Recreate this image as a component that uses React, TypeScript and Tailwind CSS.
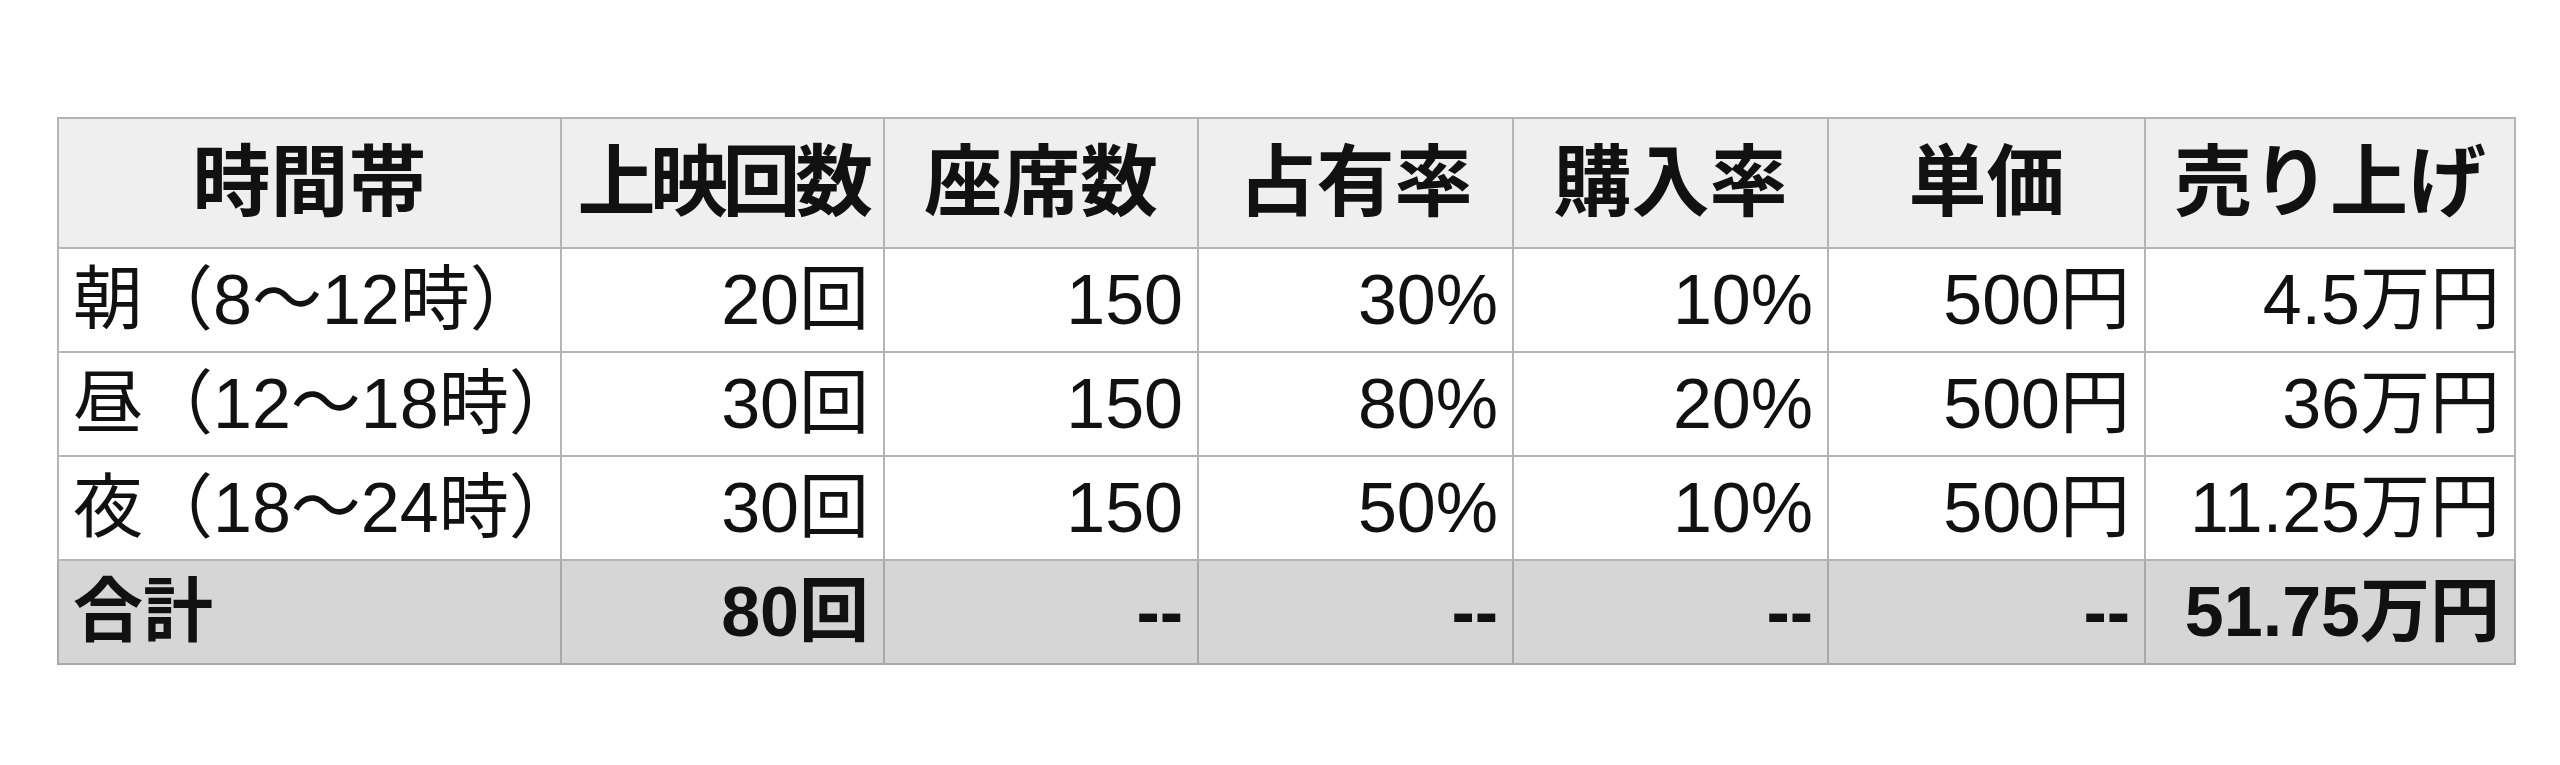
const font = {
  fontFamily: '"Liberation Sans", "Noto Sans CJK JP", sans-serif',
};

type Row = { label: string; cells: string[] };

const headers = ["時間帯", "上映回数", "座席数", "占有率", "購入率", "単価", "売り上げ"];

const rows: Row[] = [
  { label: "朝（8〜12時）", cells: ["20回", "150", "30%", "10%", "500円", "4.5万円"] },
  { label: "昼（12〜18時）", cells: ["30回", "150", "80%", "20%", "500円", "36万円"] },
  { label: "夜（18〜24時）", cells: ["30回", "150", "50%", "10%", "500円", "11.25万円"] },
];

const total = { label: "合計", cells: ["80回", "--", "--", "--", "--", "51.75万円"] };

const widths = ["w-[503px]", "w-[323px]", "w-[314px]", "w-[315px]", "w-[315px]", "w-[317px]", "w-[370px]"];

export default function App() {
  return (
    <div className="min-h-screen bg-white pl-[57px] pt-[117px]" style={font}>
      <table className="w-[2457px] table-fixed border-collapse text-[#111]">
        <colgroup>
          {widths.map((w, i) => (
            <col key={i} className={w} />
          ))}
        </colgroup>
        <thead>
          <tr className="h-[130px] bg-[#efefef]">
            {headers.map((h, i) => (
              <th
                key={h}
                className={[
                  "border-2 border-[#b4b4b4] text-center font-bold text-[78px] leading-none whitespace-nowrap",
                  i === 1 ? "tracking-[-0.07em]" : "",
                ].join(" ")}
              >
                {h}
              </th>
            ))}
          </tr>
        </thead>
        <tbody>
          {rows.map((r) => (
            <tr key={r.label} className="h-[104px] bg-white">
              <td className="border-2 border-[#b4b4b4] pl-[14px] text-left text-[70px] leading-none whitespace-nowrap">
                {r.label}
              </td>
              {r.cells.map((c, i) => (
                <td
                  key={i}
                  className="border-2 border-[#b4b4b4] pr-[14px] text-right text-[70px] leading-none whitespace-nowrap"
                >
                  {c}
                </td>
              ))}
            </tr>
          ))}
          <tr className="h-[104px] bg-[#d6d6d6]">
            <td className="border-2 border-[#a8a8a8] pl-[14px] text-left font-bold text-[70px] leading-none">
              {total.label}
            </td>
            {total.cells.map((c, i) => (
              <td
                key={i}
                className="border-2 border-[#a8a8a8] pr-[14px] text-right font-bold text-[70px] leading-none whitespace-nowrap"
              >
                {c}
              </td>
            ))}
          </tr>
        </tbody>
      </table>
    </div>
  );
}
